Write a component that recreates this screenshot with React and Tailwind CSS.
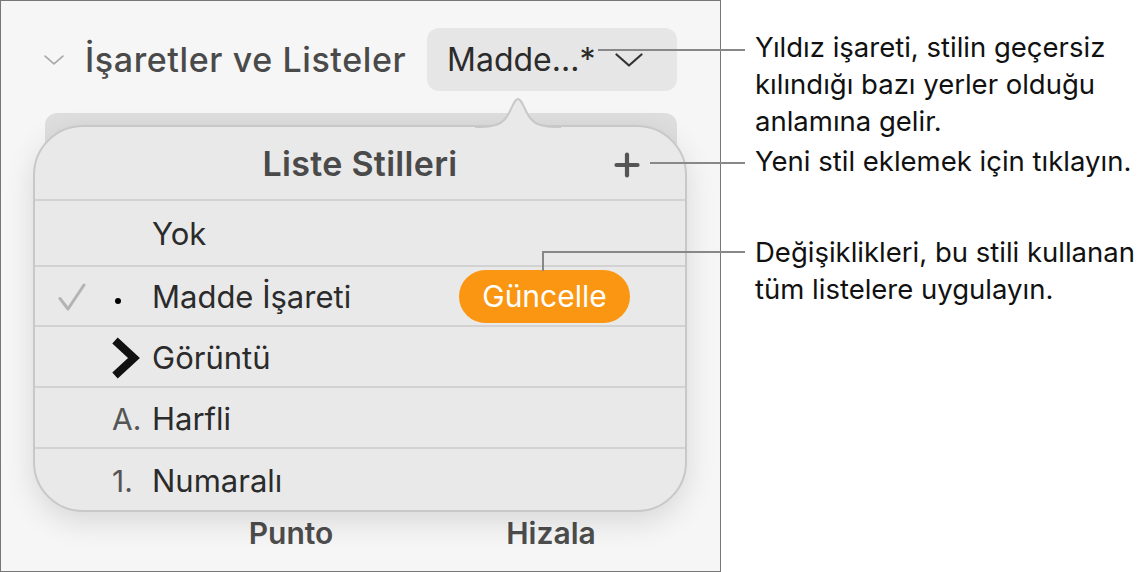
import { Plus } from 'lucide-react'

// ─── Small drawn glyphs ──────────────────────────────────────────────────────

function ChevronDown({ className, stroke = 2 }) {
  return (
    <svg className={className} viewBox="0 0 28 14" fill="none" stroke="currentColor" strokeWidth={stroke} strokeLinecap="round" strokeLinejoin="round">
      <path d="M1.5 1.5 14 12.5 26.5 1.5" />
    </svg>
  )
}

function CheckMark() {
  return (
    <svg className="h-[28px] w-[28px]" viewBox="0 0 28 28" fill="none" stroke="#b4b4b4" strokeWidth={3} strokeLinecap="round" strokeLinejoin="round">
      <path d="M2 15.5 10 26 26 2" />
    </svg>
  )
}

function ArrowBullet() {
  return (
    <svg className="h-[42px] w-[28px]" viewBox="0 0 28 42" fill="none" stroke="#111" strokeWidth={8} strokeLinejoin="miter">
      <path d="M3 3.5 22 21 3 38.5" />
    </svg>
  )
}

// ─── Popover row ─────────────────────────────────────────────────────────────

function StyleRow({ checked, bullet, label, height, last, children }) {
  return (
    <div className={`flex items-center ${height} ${last ? '' : 'border-b-2 border-[#d2d2d2]'}`}>
      <span className="ml-[23px] flex w-[28px] justify-center pt-[2px]">
        {checked && <CheckMark />}
      </span>
      <span className="ml-[26px] flex w-[40px] items-center pt-[3px] text-[30px] text-[#555]">{bullet}</span>
      <span className="pt-[3px] text-[31px] text-[#2b2b2b]">{label}</span>
      {children}
    </div>
  )
}

// ─── Main ────────────────────────────────────────────────────────────────────

export default function App() {
  return (
    <div
      className="relative flex h-[572px] w-[1146px] bg-white"
      style={{ fontFamily: 'Inter, "Noto Sans", sans-serif' }}
    >
      {/* Screenshot panel */}
      <div className="relative flex h-[572px] w-[721px] shrink-0 flex-col border border-[#777] bg-[#f6f6f6]">
        {/* Header */}
        <div className="mt-[27px] flex h-[63px] items-center">
          <ChevronDown className="ml-[43px] h-[10px] w-[20px] text-[#aaa]" stroke={2.4} />
          <span className="ml-[21px] text-[34px] font-medium tracking-[0.6px] text-[#4a4a4a]">İşaretler ve Listeler</span>
          <div className="mr-[43px] ml-auto flex h-[63px] w-[250px] items-center rounded-[12px] bg-[#e6e6e6] pl-[20px]">
            <span className="text-[32px] text-[#2b2b2b]">Madde...*</span>
            <ChevronDown className="ml-[20px] h-[14px] w-[28px] text-[#333]" stroke={2.2} />
          </div>
        </div>

        {/* Control hidden under the popover */}
        <div className="absolute top-[112px] left-[44px] h-[380px] w-[632px] rounded-[12px] bg-[#dedede]" />

        {/* Popover */}
        <div className="relative mt-[34px] ml-[32px] w-[654px] rounded-[50px] border-2 border-[#c8c8c8] bg-[#e9e9e9] shadow-[0_10px_30px_rgba(0,0,0,0.12)]">
          <svg className="absolute -top-[30px] left-[440px] h-[32px] w-[86px]" viewBox="0 0 86 32" fill="none">
            <path d="M0 30 C20 30 28 28 34 16 C38 8 40 2 43 2 C46 2 48 8 52 16 C58 28 66 30 86 30 L86 32 L0 32 Z" fill="#e9e9e9" />
            <path d="M0 30 C20 30 28 28 34 16 C38 8 40 2 43 2 C46 2 48 8 52 16 C58 28 66 30 86 30" stroke="#c8c8c8" strokeWidth={2} />
          </svg>
          <div className="relative flex h-[74px] items-center justify-center border-b-2 border-[#d2d2d2]">
            <span className="text-[34px] font-semibold tracking-[0.3px] text-[#4a4a4a]">Liste Stilleri</span>
            <Plus className="absolute top-[20px] right-[40px] h-[36px] w-[36px] text-[#555]" strokeWidth={2.8} />
          </div>
          <StyleRow label="Yok" height="h-[66px]" />
          <StyleRow checked bullet={<span className="ml-[3px] mt-[6px] h-[6px] w-[6px] rounded-full bg-black" />} label="Madde İşareti" height="h-[60px]">
            <span className="mr-[55px] ml-auto flex h-[53px] w-[171px] items-center justify-center rounded-full bg-[#fa9612] text-[30px] text-white">
              Güncelle
            </span>
          </StyleRow>
          <StyleRow bullet={<ArrowBullet />} label="Görüntü" height="h-[61px]" />
          <StyleRow bullet="A." label="Harfli" height="h-[61px]" />
          <StyleRow bullet="1." label="Numaralı" height="h-[61px]" last />
        </div>

        {/* Tabs under popover */}
        <div className="ml-[159px] flex h-[42px] items-center text-[30px] font-semibold text-[#4d4d4d]">
          <span className="flex w-[262px] justify-center">Punto</span>
          <span className="flex w-[258px] justify-center">Hizala</span>
        </div>
      </div>

      {/* Callout texts */}
      <div className="ml-[34px] flex flex-col text-[27.5px] leading-[37px] text-[#111]">
        <p className="mt-[29px]">Yıldız işareti, stilin geçersiz<br />kılındığı bazı yerler olduğu<br />anlamına gelir.</p>
        <p className="mt-[3px]">Yeni stil eklemek için tıklayın.</p>
        <p className="mt-[54px]">Değişiklikleri, bu stili kullanan<br />tüm listelere uygulayın.</p>
      </div>

      {/* Callout leader lines */}
      <div className="absolute top-[49px] left-[598px] h-[2px] w-[147px] bg-[#888]" />
      <div className="absolute top-[162px] left-[650px] h-[2px] w-[95px] bg-[#888]" />
      <div className="absolute top-[251px] left-[542px] h-[2px] w-[203px] bg-[#888]" />
      <div className="absolute top-[251px] left-[542px] h-[20px] w-[2px] bg-[#888]" />
    </div>
  )
}
